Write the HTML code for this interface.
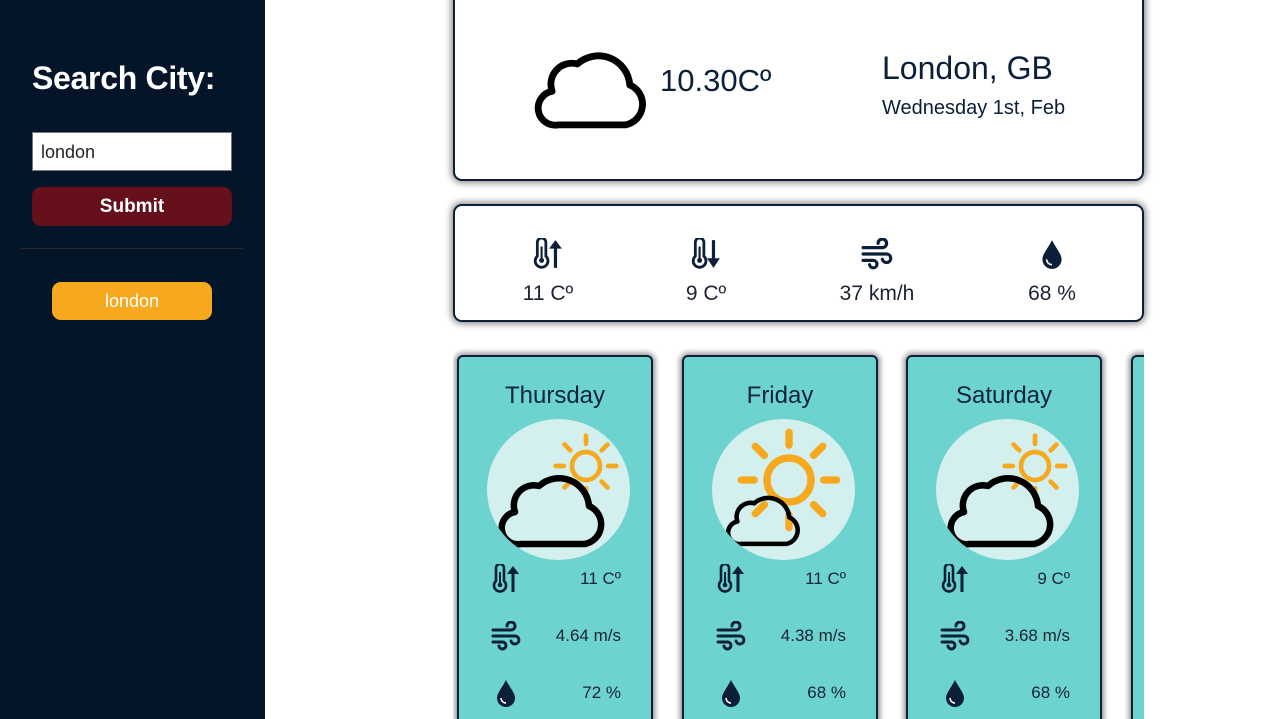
<!DOCTYPE html>
<html><head><meta charset="utf-8"><style>
*{box-sizing:border-box;margin:0;padding:0}
html,body{width:1263px;height:719px;overflow:hidden}
body{background:#fff;font-family:"Liberation Sans",sans-serif;position:relative;color:#0a1f38}
.side{position:absolute;left:0;top:0;width:265px;height:719px;background:#04152a}
.side h1{position:absolute;left:32px;top:60px;color:#fff;font-size:32px;font-weight:bold;letter-spacing:-0.3px}
.inp{position:absolute;left:32px;top:132px;width:200px;height:39px;background:#fff;border:1px solid #777;font-size:18px;color:#222;padding:9px 0 0 8px}
.sub{position:absolute;left:32px;top:187px;width:200px;height:39px;background:#66101c;border-radius:9px;color:#fff;font-weight:bold;font-size:19px;text-align:center;line-height:40px}
.hr{position:absolute;left:21px;top:248px;width:222px;height:1px;background:#2a2a24}
.hist{position:absolute;left:52px;top:282px;width:160px;height:38px;background:#f6a81e;border-radius:9px;color:#fff;font-size:18px;text-align:center;line-height:38px}
.card{position:absolute;left:453px;width:691px;background:#fff;border:2px solid #0b1f38;border-radius:9px;box-shadow:0 0 7px 2px rgba(0,0,0,.45)}
.top{top:-12px;height:193px}
.stats{top:204px;height:118px}
.big{position:absolute;font-size:31px}
.stat{position:absolute;top:32px;width:120px;text-align:center;font-size:21px;color:#1a2233}
.stat svg{display:block;margin:0 auto 12px}
.wrap{position:absolute;left:453px;top:345px;width:691px;height:374px;overflow:hidden}
.fc{position:absolute;top:10px;width:196px;height:380px;background:#6dd3cf;border:2px solid #0b1f38;border-radius:6px;box-shadow:0 0 6px 2px rgba(0,0,0,.45)}
.fc h2{position:absolute;top:25px;left:0;width:100%;text-align:center;font-size:24px;font-weight:normal;color:#0b2340}
.circ{position:absolute;left:28px;top:62px;width:143px;height:141px;border-radius:50%;background:#d3f0ef;overflow:hidden}
.row{position:absolute;left:32px;width:130px;height:30px;font-size:17px;color:#1a2233}
.row svg{position:absolute;left:0;top:0}
.row span{position:absolute;right:0;top:5px}
</style></head><body>
<svg width="0" height="0" style="position:absolute">
<defs>
<symbol id="cloud" viewBox="0 0 120 82"><path d="M28 78 H92 A20 20 0 0 0 96 40 A30 30 0 0 0 46 20 A20 20 0 0 0 22 46 A16 16 0 0 0 28 78 Z" fill="none" stroke="#000" stroke-width="6.5" stroke-linejoin="round"/></symbol>
<symbol id="therm" viewBox="0 0 30 30"><path d="M5 4 a4 4 0 0 1 8 0 V17 a6 6 0 1 1 -8 0 Z" fill="none" stroke="#0b1f38" stroke-width="2.6"/><circle cx="9" cy="21" r="2.3" fill="#0b1f38"/><line x1="9" y1="8" x2="9" y2="20" stroke="#0b1f38" stroke-width="2"/></symbol>
<symbol id="up" viewBox="0 0 30 30"><path d="M22 28 V6" stroke="#0b1f38" stroke-width="3"/><path d="M16 10 L22 2 L28 10 Z" fill="#0b1f38"/></symbol>
<symbol id="dn" viewBox="0 0 30 30"><path d="M22 2 V22" stroke="#0b1f38" stroke-width="3"/><path d="M16 19 L22 28 L28 19 Z" fill="#0b1f38"/></symbol>
<symbol id="wind" viewBox="0 0 30 30"><path d="M2 9 H20 A4 4 0 1 0 16 5 M2 15 H24 A4 4 0 1 1 20 20 M2 21 H12 A3.5 3.5 0 1 1 8 25" fill="none" stroke="#0b1f38" stroke-width="3" stroke-linecap="round"/></symbol>
<symbol id="drop" viewBox="0 0 30 30"><path d="M15 2 C11 10 6 15 6 20 A9 9 0 0 0 24 20 C24 15 19 10 15 2 Z" fill="#0b1f38"/><path d="M10 20 A5 5 0 0 0 15 25" fill="none" stroke="#fff" stroke-width="1.5"/></symbol>
<symbol id="sun" viewBox="0 0 60 60"><circle cx="30" cy="30" r="12" fill="none" stroke="#f6a81e" stroke-width="4"/><g stroke="#f6a81e" stroke-width="4" stroke-linecap="round"><path d="M30 4v7M30 49v7M4 30h7M49 30h7M11.6 11.6l5 5M43.4 43.4l5 5M11.6 48.4l5-5M43.4 16.6l5-5"/></g></symbol>
</defs></svg>

<div class="side">
<h1>Search City:</h1>
<div class="inp">london</div>
<div class="sub">Submit</div>
<div class="hr"></div>
<div class="hist">london</div>
</div>

<div class="card top">
<svg style="position:absolute;left:74px;top:52px" width="126" height="88"><use href="#cloud"/></svg>
<div class="big" style="left:205px;top:73px">10.30Cº</div>
<div class="big" style="left:427px;top:60px;font-size:32px">London, GB</div>
<div style="position:absolute;left:427px;top:107px;font-size:20px">Wednesday 1st, Feb</div>
</div>

<div class="card stats">
<div class="stat" style="left:33px"><svg width="32" height="32"><use href="#therm"/><use href="#up"/></svg>11 Cº</div>
<div class="stat" style="left:191px"><svg width="32" height="32"><use href="#therm"/><use href="#dn"/></svg>9 Cº</div>
<div class="stat" style="left:362px"><svg width="32" height="32"><use href="#wind"/></svg>37 km/h</div>
<div class="stat" style="left:537px"><svg width="32" height="32"><use href="#drop"/></svg>68 %</div>
</div>

<div class="wrap">
<div class="fc" style="left:4px"><h2>Thursday</h2>
<div class="circ"><svg style="position:absolute;left:64px;top:12px" width="70" height="70"><use href="#sun"/></svg><svg style="position:absolute;left:6px;top:46px" width="120" height="84"><use href="#cloud"/></svg></div>
<div class="row" style="top:207px"><svg width="30" height="30"><use href="#therm"/><use href="#up"/></svg><span>11 Cº</span></div>
<div class="row" style="top:264px"><svg width="30" height="30"><use href="#wind"/></svg><span>4.64 m/s</span></div>
<div class="row" style="top:321px"><svg width="30" height="30"><use href="#drop"/></svg><span>72 %</span></div>
</div>
<div class="fc" style="left:229px"><h2>Friday</h2>
<div class="circ"><svg style="position:absolute;left:22px;top:6px" width="110" height="110"><use href="#sun"/></svg><svg style="position:absolute;left:10px;top:68px" width="84" height="62"><use href="#cloud"/></svg></div>
<div class="row" style="top:207px"><svg width="30" height="30"><use href="#therm"/><use href="#up"/></svg><span>11 Cº</span></div>
<div class="row" style="top:264px"><svg width="30" height="30"><use href="#wind"/></svg><span>4.38 m/s</span></div>
<div class="row" style="top:321px"><svg width="30" height="30"><use href="#drop"/></svg><span>68 %</span></div>
</div>
<div class="fc" style="left:453px"><h2>Saturday</h2>
<div class="circ"><svg style="position:absolute;left:64px;top:12px" width="70" height="70"><use href="#sun"/></svg><svg style="position:absolute;left:6px;top:46px" width="120" height="84"><use href="#cloud"/></svg></div>
<div class="row" style="top:207px"><svg width="30" height="30"><use href="#therm"/><use href="#up"/></svg><span>9 Cº</span></div>
<div class="row" style="top:264px"><svg width="30" height="30"><use href="#wind"/></svg><span>3.68 m/s</span></div>
<div class="row" style="top:321px"><svg width="30" height="30"><use href="#drop"/></svg><span>68 %</span></div>
</div>
<div class="fc" style="left:678px"></div>
</div>
</body></html>
